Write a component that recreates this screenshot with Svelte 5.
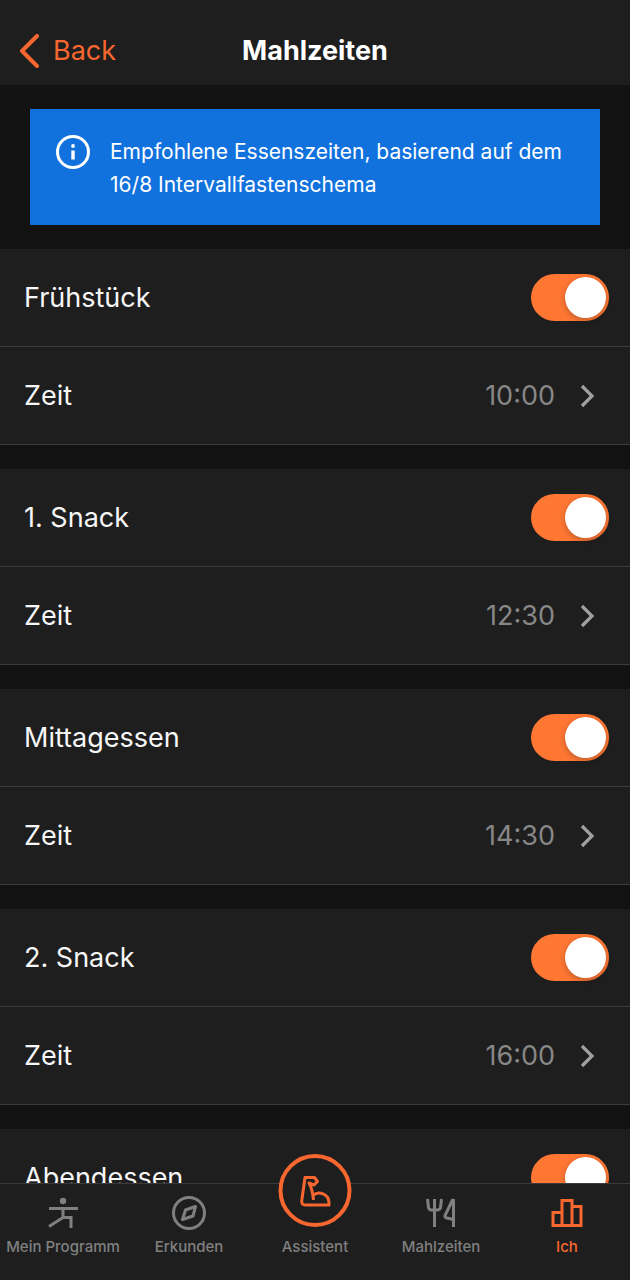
<script lang="ts">
  /**
   * Meal times settings. Each meal can be switched on or off and, once it has
   * a time, gets its own time row; the tab bar stays below the scrolling list.
   */
  type Meal = { id: string; name: string; time?: string; enabled: boolean };
  type Tab = { id: string; label: string };

  let meals = $state<Meal[]>([
    { id: "breakfast", name: "Frühstück", time: "10:00", enabled: true },
    { id: "snack-1", name: "1. Snack", time: "12:30", enabled: true },
    { id: "lunch", name: "Mittagessen", time: "14:30", enabled: true },
    { id: "snack-2", name: "2. Snack", time: "16:00", enabled: true },
    { id: "dinner", name: "Abendessen", enabled: true },
  ]);

  const tabs: Tab[] = [
    { id: "program", label: "Mein Programm" },
    { id: "explore", label: "Erkunden" },
    { id: "assistant", label: "Assistent" },
    { id: "meals", label: "Mahlzeiten" },
    { id: "me", label: "Ich" },
  ];

  let active = $state("me");
</script>

<div class="screen">
  <header>
    <button class="back">
      <svg width="22" height="34" viewBox="0 0 22 34" aria-hidden="true">
        <path d="M18 2 L3 17 L18 32" stroke-width="4" stroke-linecap="round" stroke-linejoin="round" />
      </svg>
      Back
    </button>
    <h1>Mahlzeiten</h1>
  </header>

  <main>
    <div class="notice" role="note">
      <svg width="34" height="34" viewBox="0 0 34 34" aria-hidden="true">
        <circle cx="17" cy="17" r="15.5" stroke-width="3" />
        <path d="M17 15.5 V24.5" stroke-width="3.4" />
        <circle cx="17" cy="11" r="1.9" class="solid" />
      </svg>
      <p>Empfohlene Essenszeiten, basierend auf dem 16/8 Intervallfastenschema</p>
    </div>

    {#each meals as meal (meal.id)}
      <section>
        <label class="row">
          <span>{meal.name}</span>
          <input type="checkbox" role="switch" bind:checked={meal.enabled} />
        </label>
        {#if meal.time}
          <button class="row time">
            <span>Zeit</span>
            <span class="value">{meal.time}</span>
            <svg width="16" height="24" viewBox="0 0 16 24" aria-hidden="true">
              <path d="M3 2 L13 12 L3 22" stroke-width="3.2" />
            </svg>
          </button>
        {/if}
      </section>
    {/each}
  </main>

  <nav>
    {#each tabs as tab (tab.id)}
      <button
        class="tab"
        class:active={tab.id === active}
        aria-current={tab.id === active ? "page" : undefined}
        onclick={() => (active = tab.id)}
      >
        {#if tab.id === "assistant"}
          <span class="bubble">
            <svg width="34" height="34" viewBox="0 0 34 34" aria-hidden="true">
              <path
                d="M14.500 21.500 C20 16.500 30.500 19.500 30.500 29 V31 H7 Q3 31 3.200 27 L6.500 3.500 H16 L19 7.500 L15.500 11 L10.500 9 Q14 15 15 26"
                stroke-width="3" stroke-linejoin="round"
              />
            </svg>
          </span>
        {:else}
          <svg width="34" height="34" viewBox="0 0 34 34" aria-hidden="true">
            {#if tab.id === "program"}
              <circle cx="17" cy="5" r="3.2" class="solid" />
              <path d="M3 12.5 H32 M17 12.5 V22 M3 30.5 L17 21.5 H25 V32" stroke-width="3" />
            {:else if tab.id === "explore"}
              <circle cx="17" cy="17" r="15.5" stroke-width="3" />
              <path d="M23.5 10.5 L21 20 L10.5 23.5 L13.5 14 Z" stroke-width="3" stroke-linejoin="round" />
            {:else if tab.id === "meals"}
              <path d="M3.5 3 L4.5 11.5 Q5 14 7.5 14 H13 Q16 14 16.500 11.5 L17.500 3 M10.5 3 V31" stroke-width="3" />
              <path d="M29.5 3 V31 M29 3 L21 19.5 Q20.500 21.500 23 22 L29.500 23.500" stroke-width="3" />
            {:else}
              <path d="M3 29.500 V16.500 H12 M12 29.500 V4.500 H22 V29.500 M22 10.500 H31 V29.500 M1.500 29.500 H32.500" stroke-width="3" />
            {/if}
          </svg>
        {/if}
        <span>{tab.label}</span>
      </button>
    {/each}
  </nav>
</div>

<style>
  :global(body) { margin: 0; background: #121212; }

  .screen {
    display: flex; flex-direction: column; height: 100vh;
    background: #121212; color: #f7f7f7;
    font-family: Inter, "Liberation Sans", sans-serif;
  }
  button { margin: 0; padding: 0; border: 0; background: none; color: inherit; font: inherit; cursor: pointer; }
  svg { flex: none; display: block; fill: none; stroke: currentColor; }
  svg .solid { fill: currentColor; stroke: none; }

  header {
    flex: none; display: grid; grid-template-columns: 1fr auto 1fr; align-items: center;
    padding: 16px 19px 0; height: 69px; background: #1e1e1e;
  }
  .back { display: flex; align-items: center; gap: 12px; justify-self: start; color: #f8672f; font-size: 27px; }
  h1 { margin: 0; font-size: 27px; font-weight: 700; color: #fff; }

  main { flex: 1; min-height: 0; overflow-y: auto; scrollbar-width: none; }

  .notice {
    display: flex; align-items: flex-start; gap: 20px;
    margin: 24px 30px; padding: 26px 26px 24px; background: #1172dd; color: #fff;
  }
  .notice p { margin: 0; font-size: 21px; line-height: 33px; }

  section { margin-bottom: 24px; background: #1e1e1e; }
  .row {
    display: flex; align-items: center; box-sizing: border-box; width: 100%; height: 98px;
    padding: 0 21px 0 24px; border-bottom: 1px solid #3b3b3b;
    font-size: 27px; text-align: left; cursor: pointer;
  }
  .row span:first-child { flex: 1; }
  .time { padding-right: 35px; color: #f7f7f7; }
  .value { margin-right: 24px; color: #878787; }
  .time svg { color: #a0a0a0; }

  input {
    appearance: none; flex: none; display: flex; box-sizing: border-box;
    width: 78px; height: 47px; margin: 0; padding: 3px; border-radius: 24px;
    background: #4a4a4a; cursor: pointer;
  }
  input::before {
    content: ""; width: 41px; height: 41px; border-radius: 50%;
    background: #fff; box-shadow: 0 2px 6px rgba(0, 0, 0, 0.25);
  }
  input:checked { justify-content: flex-end; background: #ff7733; }

  nav {
    flex: none; display: grid; grid-template-columns: repeat(5, 1fr); box-sizing: border-box;
    height: 97px; border-top: 1px solid #3b3b3b; background: #1e1e1e;
  }
  .tab {
    position: relative; display: flex; flex-direction: column; align-items: center; justify-content: flex-end;
    gap: 8px; padding-bottom: 24px; color: #808080;
    font-size: 15px; font-weight: 500; line-height: 18px; white-space: nowrap;
  }
  .active { color: #f8672f; }

  /* raised button straddling the top edge of the bar */
  .bubble {
    position: absolute; bottom: 53px; left: 50%; transform: translateX(-50%);
    display: flex; align-items: center; justify-content: center; box-sizing: border-box;
    width: 73px; height: 73px; border: 4px solid #f8672f; border-radius: 50%;
    background: #1e1e1e; color: #f8672f;
  }
</style>
